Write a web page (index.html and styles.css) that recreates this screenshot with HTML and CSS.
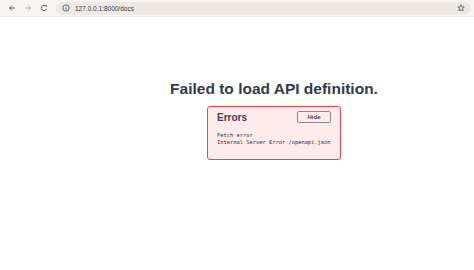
FILE: index.html
```html
<!DOCTYPE html>
<html lang="en">
<head>
    <meta charset="UTF-8">
    <meta name="viewport" content="width=device-width, initial-scale=1.0">
    <title>FastAPI - Swagger UI</title>
    <link rel="stylesheet" href="styles.css">
</head>
<body>
    <div class="toolbar">
        <span class="nav-btn">
            <svg width="8" height="8" viewBox="0 0 16 16"><path d="M14 8H3M8 3L3 8l5 5" fill="none" stroke="#5f5b59" stroke-width="2"/></svg>
        </span>
        <span class="nav-btn">
            <svg width="8" height="8" viewBox="0 0 16 16"><path d="M2 8h11M8 3l5 5-5 5" fill="none" stroke="#b9b4b1" stroke-width="2"/></svg>
        </span>
        <span class="nav-btn">
            <svg width="8" height="8" viewBox="0 0 16 16"><path d="M13 9.5A5.2 5.2 0 1 1 11.8 4.2" fill="none" stroke="#5f5b59" stroke-width="2"/><path d="M9.5 2.5h4v4z" fill="#5f5b59"/></svg>
        </span>
        <div class="omnibox">
            <svg class="info" width="8" height="8" viewBox="0 0 16 16"><circle cx="8" cy="8" r="6.3" fill="none" stroke="#4a4644" stroke-width="1.6"/><path d="M8 7v4.5M8 4.5v1" stroke="#4a4644" stroke-width="1.6"/></svg>
            <span class="url">127.0.0.1:8000/docs</span>
            <svg class="star" width="8" height="8" viewBox="0 0 16 16"><path d="M8 1.5l1.9 4.3 4.6.4-3.5 3 1.1 4.6L8 11.4l-4.1 2.4 1.1-4.6-3.5-3 4.6-.4z" fill="none" stroke="#4a4644" stroke-width="1.5" stroke-linejoin="round"/></svg>
        </div>
    </div>

    <main class="swagger-ui">
        <div class="loading-container">
            <h4 class="title">Failed to load API definition.</h4>
            <div class="errors-wrapper">
                <div class="errors-header">
                    <h4>Errors</h4>
                    <button class="btn-clear">Hide</button>
                </div>
                <div class="error-item">
                    <div>Fetch error</div>
                    <div>Internal Server Error /openapi.json</div>
                </div>
            </div>
        </div>
    </main>
</body>
</html>
```

FILE: styles.css
```css
body {
    margin: 0;
    background: #ffffff;
    font-family: 'Liberation Sans', Arial, sans-serif;
}

.toolbar {
    height: 16px;
    display: flex;
    align-items: center;
    padding: 0 3px 0 4px;
    background: #f8f5f3;
    border-bottom: 1px solid #ece8e5;
}

.nav-btn {
    width: 16px;
    display: flex;
    justify-content: center;
    align-items: center;
}

.omnibox {
    flex: 1;
    height: 13px;
    margin-left: 4px;
    display: flex;
    align-items: center;
    padding: 0 6px 0 6px;
    background: #efe9e6;
    border-radius: 7px;
}

.url {
    margin-left: 5px;
    font-family: 'Liberation Sans', Arial, sans-serif;
    font-size: 6.5px;
    color: #3a3634;
}

.star {
    margin-left: auto;
}

.swagger-ui {
    display: flex;
    justify-content: center;
    padding: 63px 0 0 74px;
}

.loading-container {
    display: flex;
    flex-direction: column;
    align-items: center;
}

.title {
    margin: 0;
    font-size: 15.5px;
    font-weight: bold;
    color: #343a48;
}

.errors-wrapper {
    width: 123px;
    margin-top: 8px;
    padding: 4px 0 13px 9px;
    background: rgba(249, 62, 62, .1);
    border: 1.5px solid #f93e3e;
    border-radius: 3px;
    box-sizing: content-box;
}

.errors-header {
    display: flex;
    align-items: center;
    justify-content: space-between;
    padding-right: 9px;
}

.errors-header h4 {
    margin: 0;
    font-size: 10px;
    font-weight: bold;
    color: #3b4151;
}

.btn-clear {
    width: 34px;
    height: 12px;
    padding: 0;
    font-family: 'Liberation Sans', Arial, sans-serif;
    font-size: 6px;
    font-weight: bold;
    color: #3b4151;
    background: transparent;
    border: 1.2px solid #888888;
    border-radius: 2px;
}

.error-item {
    margin-top: 9px;
    font-family: 'DejaVu Sans Mono', monospace;
    font-size: 5.4px;
    line-height: 7px;
    color: #2a2f3a;
}
```
